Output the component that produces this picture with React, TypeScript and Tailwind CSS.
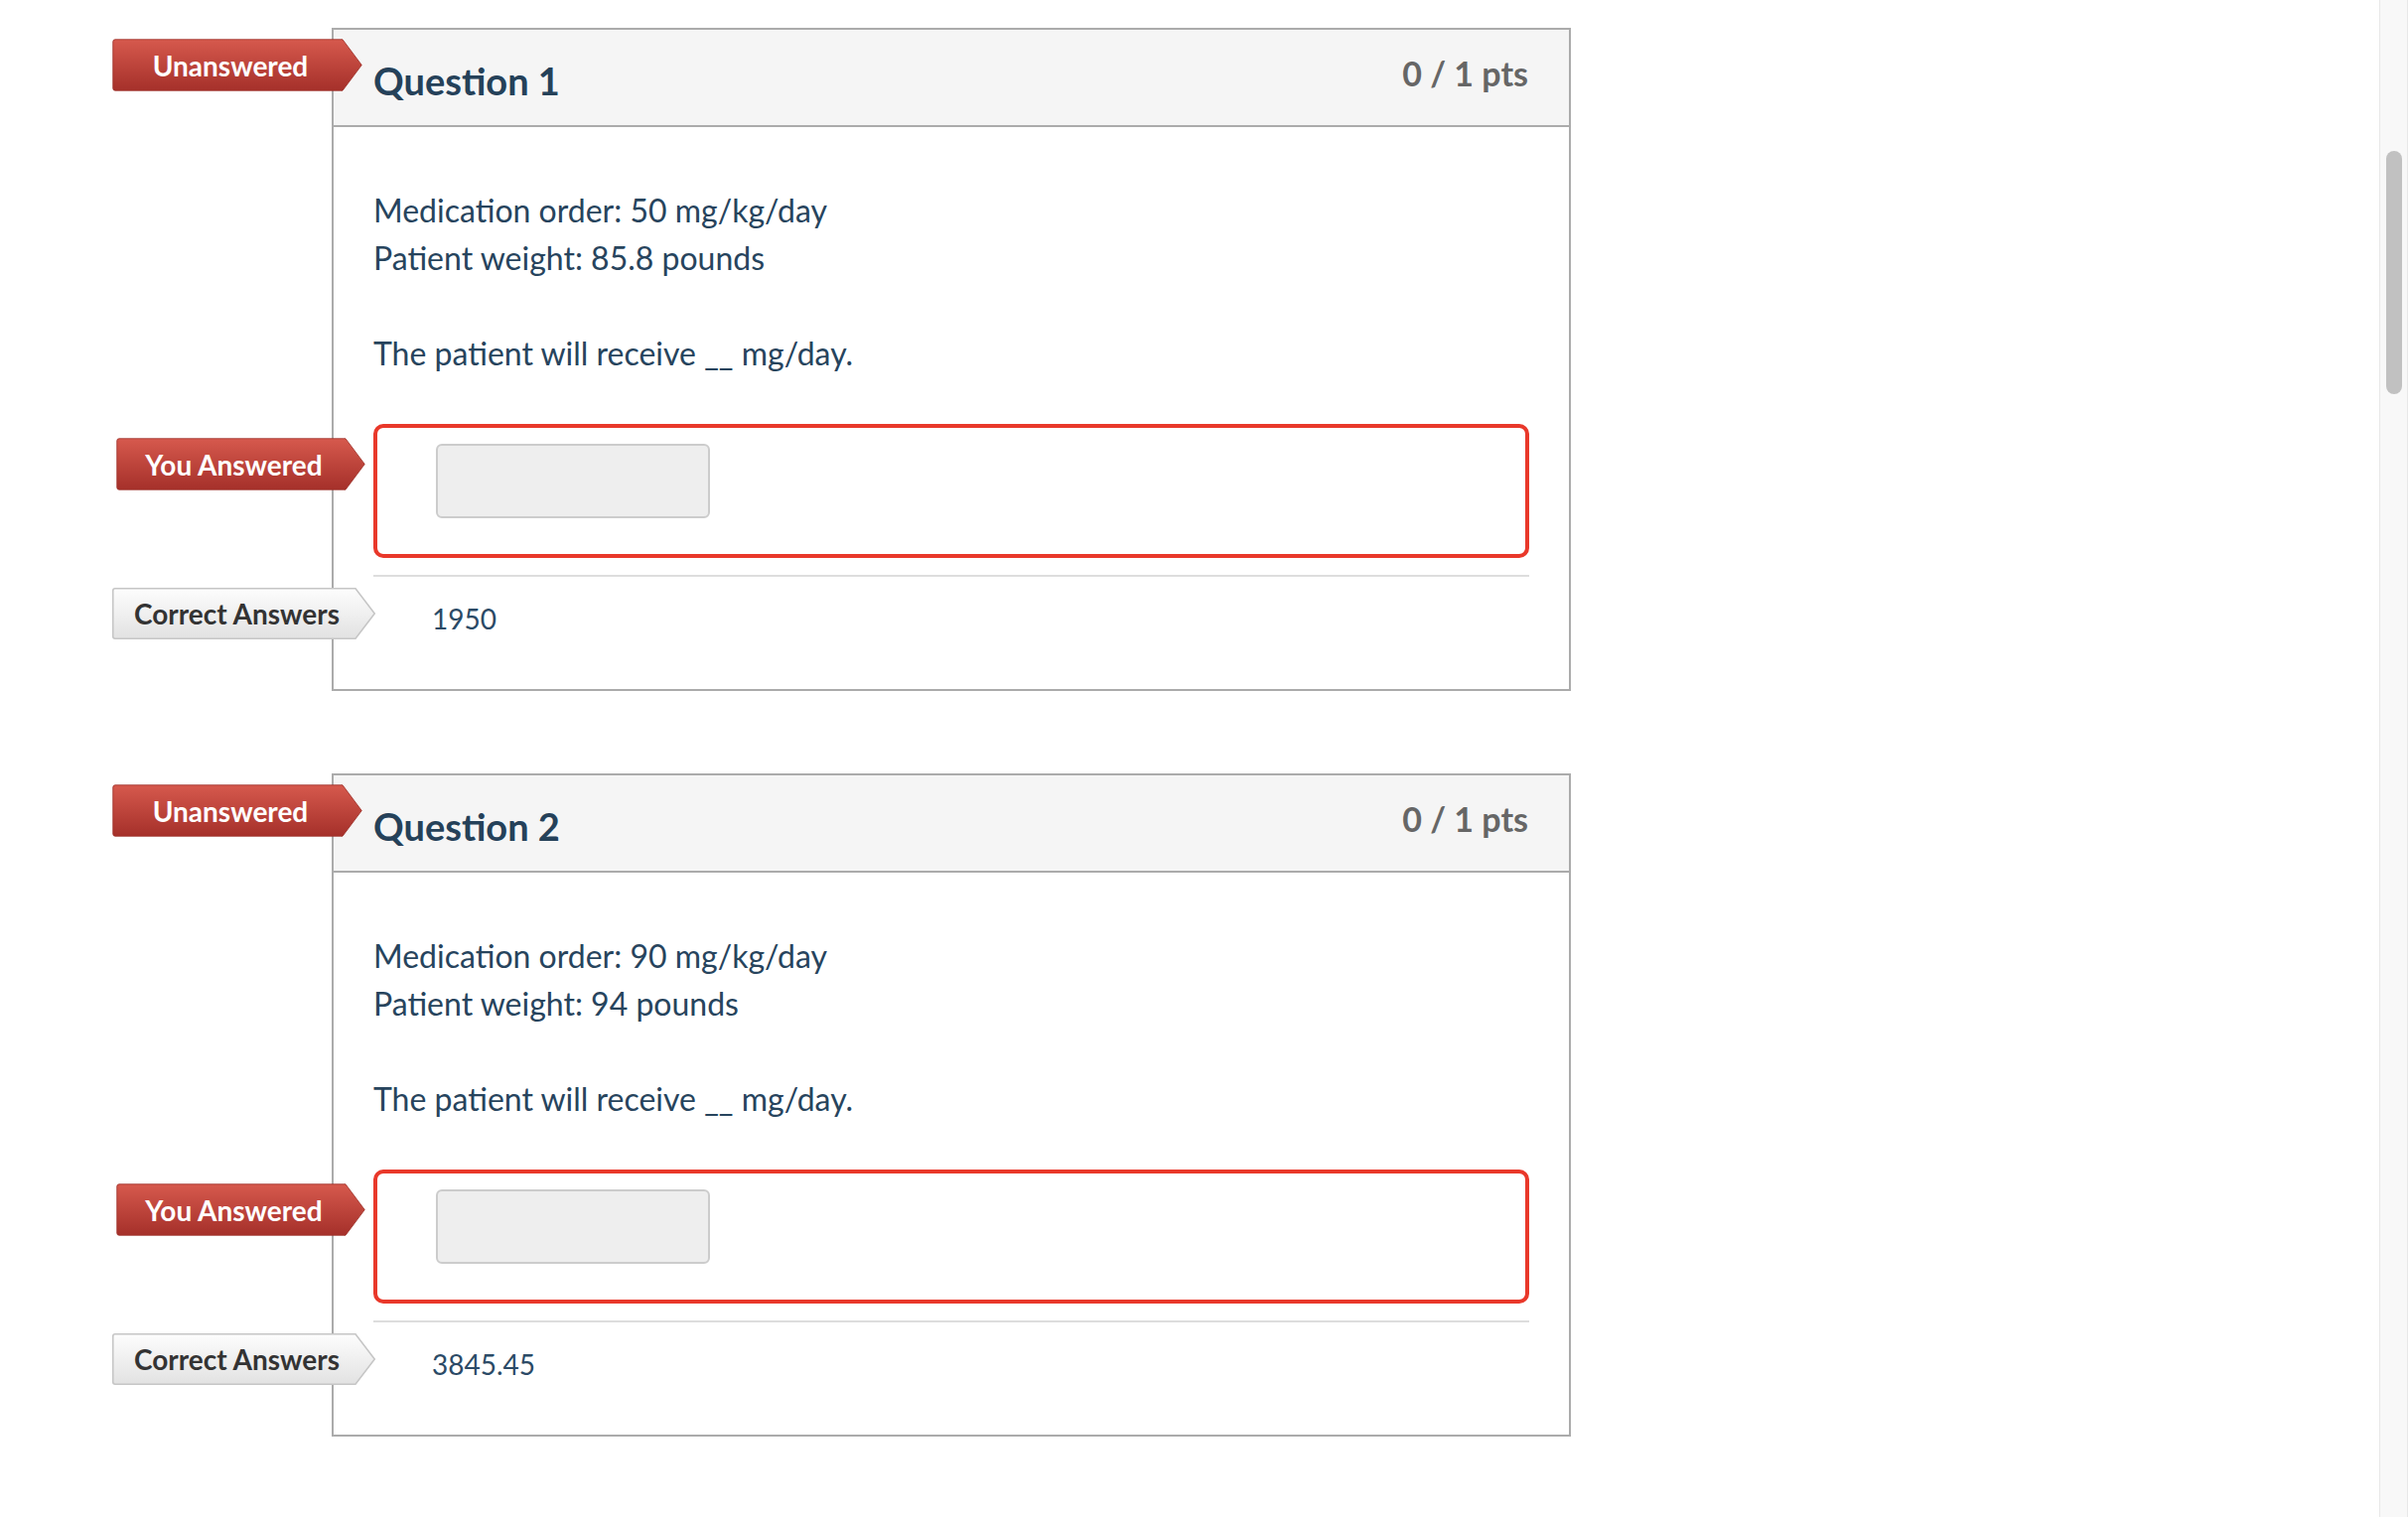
import React from 'react'

type TagProps = {
  text: string
  body: number
  height: number
  tone: 'red' | 'gray'
  className: string
}

// arrow-shaped status badge that sits over the left edge of the card
const Tag = ({ text, body, height, tone, className }: TagProps) => {
  const tip = 20
  const w = body + tip
  const mid = height / 2
  const id = `grad-${tone}-${body}`
  return (
    <div className={`absolute flex items-center ${className}`} style={{ width: w, height }}>
      <svg width={w} height={height} className="absolute inset-0 overflow-visible">
        <defs>
          <linearGradient id={id} x1="0" y1="0" x2="0" y2="1">
            {tone === 'red' ? (
              <>
                <stop offset="0" stopColor="#d6594d" />
                <stop offset="1" stopColor="#a5302a" />
              </>
            ) : (
              <>
                <stop offset="0" stopColor="#fdfdfd" />
                <stop offset="1" stopColor="#e2e2e2" />
              </>
            )}
          </linearGradient>
        </defs>
        <path
          d={`M3 0.75 H${body} L${w - 0.75} ${mid} L${body} ${height - 0.75} H3 Q0.75 ${height - 0.75} 0.75 ${height - 3} V3 Q0.75 0.75 3 0.75 Z`}
          fill={`url(#${id})`}
          stroke={tone === 'red' ? '#9c2e27' : '#c6c6c6'}
          strokeWidth={tone === 'red' ? 0.8 : 1.6}
        />
      </svg>
      <span
        className={`relative flex justify-center pl-[6px] text-[28px] font-bold leading-none ${
          tone === 'red' ? 'text-white' : 'text-[#333333]'
        }`}
        style={{ width: body }}
      >
        {text}
      </span>
    </div>
  )
}

type Question = {
  num: number
  order: string
  weight: string
  correct: string
}

const questions: Question[] = [
  { num: 1, order: '50', weight: '85.8', correct: '1950' },
  { num: 2, order: '90', weight: '94', correct: '3845.45' },
]

const QuestionCard = ({ q }: { q: Question }) => (
  <div className="w-[1248px] border-2 border-[#ababab] bg-white">
    {/* header */}
    <div className="relative flex h-[98px] items-start justify-between border-b-2 border-[#ababab] bg-[#f5f5f5] pl-[40px] pr-[41px]">
      <Tag text="Unanswered" body={232} height={53} tone="red" className="left-[-223px] top-[9px]" />
      <h2 className="pt-[28px] text-[38px] font-bold leading-[46px] text-[#254159]">Question {q.num}</h2>
      <div className="pt-[24px] text-[34px] font-bold leading-[40px] text-[#666666]">0 / 1 pts</div>
    </div>

    {/* body */}
    <div className="px-[40px] pt-[60px] text-[32px] leading-[48px] text-[#27445d]">
      <p>Medication order: {q.order} mg/kg/day</p>
      <p>Patient weight: {q.weight} pounds</p>
      <p className="mt-[48px]">The patient will receive __ mg/day.</p>

      <div className="relative mt-[47px] h-[135px] rounded-[10px] border-4 border-[#e9382a] pl-[59px] pt-[16px]">
        <Tag text="You Answered" body={231} height={53} tone="red" className="left-[-263px] top-[10px]" />
        <div className="h-[75px] w-[276px] rounded-[6px] border-2 border-[#cccccc] bg-[#eeeeee]" />
      </div>

      <div className="mt-[17px] h-[2px] bg-[#dddddd]" />

      <div className="relative h-[113px] pl-[59px] pt-[22px]">
        <Tag text="Correct Answers" body={245} height={52} tone="gray" className="left-[-263px] top-[11px]" />
        <div className="text-[28px] leading-[40px] text-[#2b4a66]">{q.correct}</div>
      </div>
    </div>
  </div>
)

export default function App() {
  return (
    <div className="flex min-h-[1528px] w-full bg-white [font-family:Lato,sans-serif]">
      <main className="flex flex-1 flex-col gap-[83px] pl-[334px] pt-[28px]">
        {questions.map((q) => (
          <QuestionCard key={q.num} q={q} />
        ))}
      </main>
      <aside className="w-[29px] shrink-0 border-l border-r border-[#e8e8e8] bg-[#f8f8f8] pl-[6px] pt-[152px]">
        <div className="h-[245px] w-[16px] rounded-full bg-[#c1c1c1]" />
      </aside>
    </div>
  )
}
